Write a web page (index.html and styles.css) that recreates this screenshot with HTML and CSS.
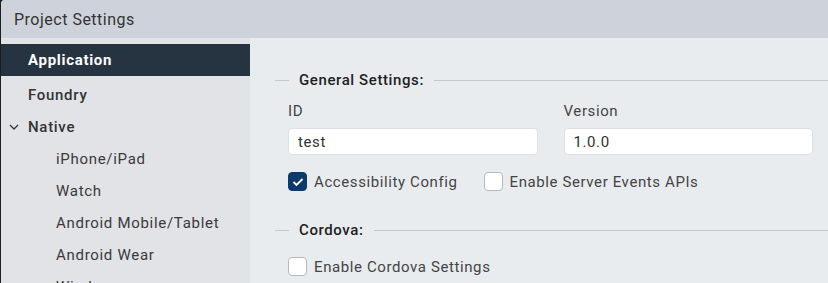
FILE: index.html
```html
<!DOCTYPE html>
<html lang="en">
  <head>
    <meta charset="UTF-8" />
    <title>Project Settings</title>
    <link rel="stylesheet" href="styles.css">
  </head>
  <body>
    <div class="window">
      <header class="title-bar">Project Settings</header>

      <div class="body">
        <nav class="sidebar">
          <a class="nav-item active">Application</a>
          <a class="nav-item">Foundry</a>
          <a class="nav-item">
            <svg class="chevron" width="10" height="6" viewBox="0 0 10 6">
              <path d="M1 1 L5 5 L9 1" fill="none" stroke="#333" stroke-width="1.3" />
            </svg>
            Native
          </a>
          <a class="nav-item sub">iPhone/iPad</a>
          <a class="nav-item sub">Watch</a>
          <a class="nav-item sub">Android Mobile/Tablet</a>
          <a class="nav-item sub">Android Wear</a>
          <a class="nav-item sub">Windows</a>
        </nav>

        <main class="content">
          <section class="group">
            <h2 class="group-title">General Settings:</h2>
            <div class="fields">
              <label class="field">
                <span class="field-label">ID</span>
                <input class="text-input" type="text" value="test" />
              </label>
              <label class="field">
                <span class="field-label">Version</span>
                <input class="text-input" type="text" value="1.0.0" />
              </label>
            </div>
            <div class="checks">
              <label class="check">
                <span class="box checked">
                  <svg width="12" height="10" viewBox="0 0 12 10">
                    <path d="M1.5 5 L4.5 8 L10.5 2" fill="none" stroke="#fff" stroke-width="1.8" />
                  </svg>
                </span>
                Accessibility Config
              </label>
              <label class="check">
                <span class="box"></span>
                Enable Server Events APIs
              </label>
            </div>
          </section>

          <section class="group">
            <h2 class="group-title">Cordova:</h2>
            <div class="checks">
              <label class="check">
                <span class="box"></span>
                Enable Cordova Settings
              </label>
            </div>
          </section>
        </main>
      </div>
    </div>
  </body>
</html>
```

FILE: styles.css
```css
* {
  margin: 0;
  padding: 0;
  box-sizing: border-box;
  font-family: Roboto, "Liberation Sans", sans-serif;
}

body {
  background-color: #1e1e1e;
  height: 283px;
  overflow: hidden;
}

.window {
  margin-left: 1px;
  height: 283px;
  border-top-left-radius: 4px;
  overflow: hidden;
  background-color: #e9ecef;
  display: flex;
  flex-direction: column;
}

.title-bar {
  height: 38px;
  flex-shrink: 0;
  padding-left: 13px;
  display: flex;
  align-items: center;
  background-color: #ced3db;
  color: #333;
  font-size: 16px;
  letter-spacing: 0.5px;
}

.body {
  flex: 1;
  display: flex;
}

.sidebar {
  width: 249px;
  flex-shrink: 0;
  padding-top: 6px;
  background-color: #e1e3e6;
  display: flex;
  flex-direction: column;
}

.nav-item {
  height: 32px;
  flex-shrink: 0;
  display: flex;
  align-items: center;
  padding-left: 27px;
  position: relative;
  color: #333;
  font-size: 15px;
  font-weight: 500;
  letter-spacing: 0.7px;
}

.nav-item.active {
  background-color: #263441;
  color: #ffffff;
  font-weight: 700;
  margin-bottom: 3px;
}

.nav-item.sub {
  padding-left: 55px;
  font-weight: 400;
  color: #3a3a3a;
}

.chevron {
  position: absolute;
  left: 8px;
  top: 13px;
}

.content {
  flex: 1;
  padding: 32px 0 0 25px;
}

.group + .group {
  margin-top: 29px;
}

.group-title {
  display: flex;
  align-items: center;
  gap: 10px;
  font-size: 15px;
  font-weight: 500;
  color: #222;
  letter-spacing: 0.6px;
  height: 20px;
}

.group-title::before,
.group-title::after {
  content: "";
  height: 1px;
  background-color: #c4c8cd;
}

.group-title::before {
  width: 14px;
}

.group-title::after {
  flex: 1;
}

.fields {
  display: flex;
  gap: 26px;
  padding: 11px 15px 0 13px;
}

.field {
  flex: 1;
  display: flex;
  flex-direction: column;
  gap: 7px;
}

.field-label {
  font-size: 15px;
  color: #444;
  letter-spacing: 0.6px;
  line-height: 20px;
}

.text-input {
  height: 27px;
  border: 1px solid #dde1e5;
  border-radius: 4px;
  background-color: #ffffff;
  padding: 0 9px;
  font-size: 15px;
  color: #333;
  letter-spacing: 0.6px;
  outline: none;
}

.checks {
  display: flex;
  gap: 26px;
  padding: 17px 0 0 13px;
}

.group + .group .checks {
  padding-top: 17px;
}

.check {
  display: flex;
  align-items: center;
  gap: 7px;
  font-size: 15px;
  color: #444;
  letter-spacing: 0.6px;
}

.box {
  width: 19px;
  height: 19px;
  border: 1px solid #b4b9bf;
  border-radius: 4px;
  background-color: #ffffff;
  display: flex;
  align-items: center;
  justify-content: center;
}

.box.checked {
  background-color: #0d3a6e;
  border-color: #0d3a6e;
}
```
